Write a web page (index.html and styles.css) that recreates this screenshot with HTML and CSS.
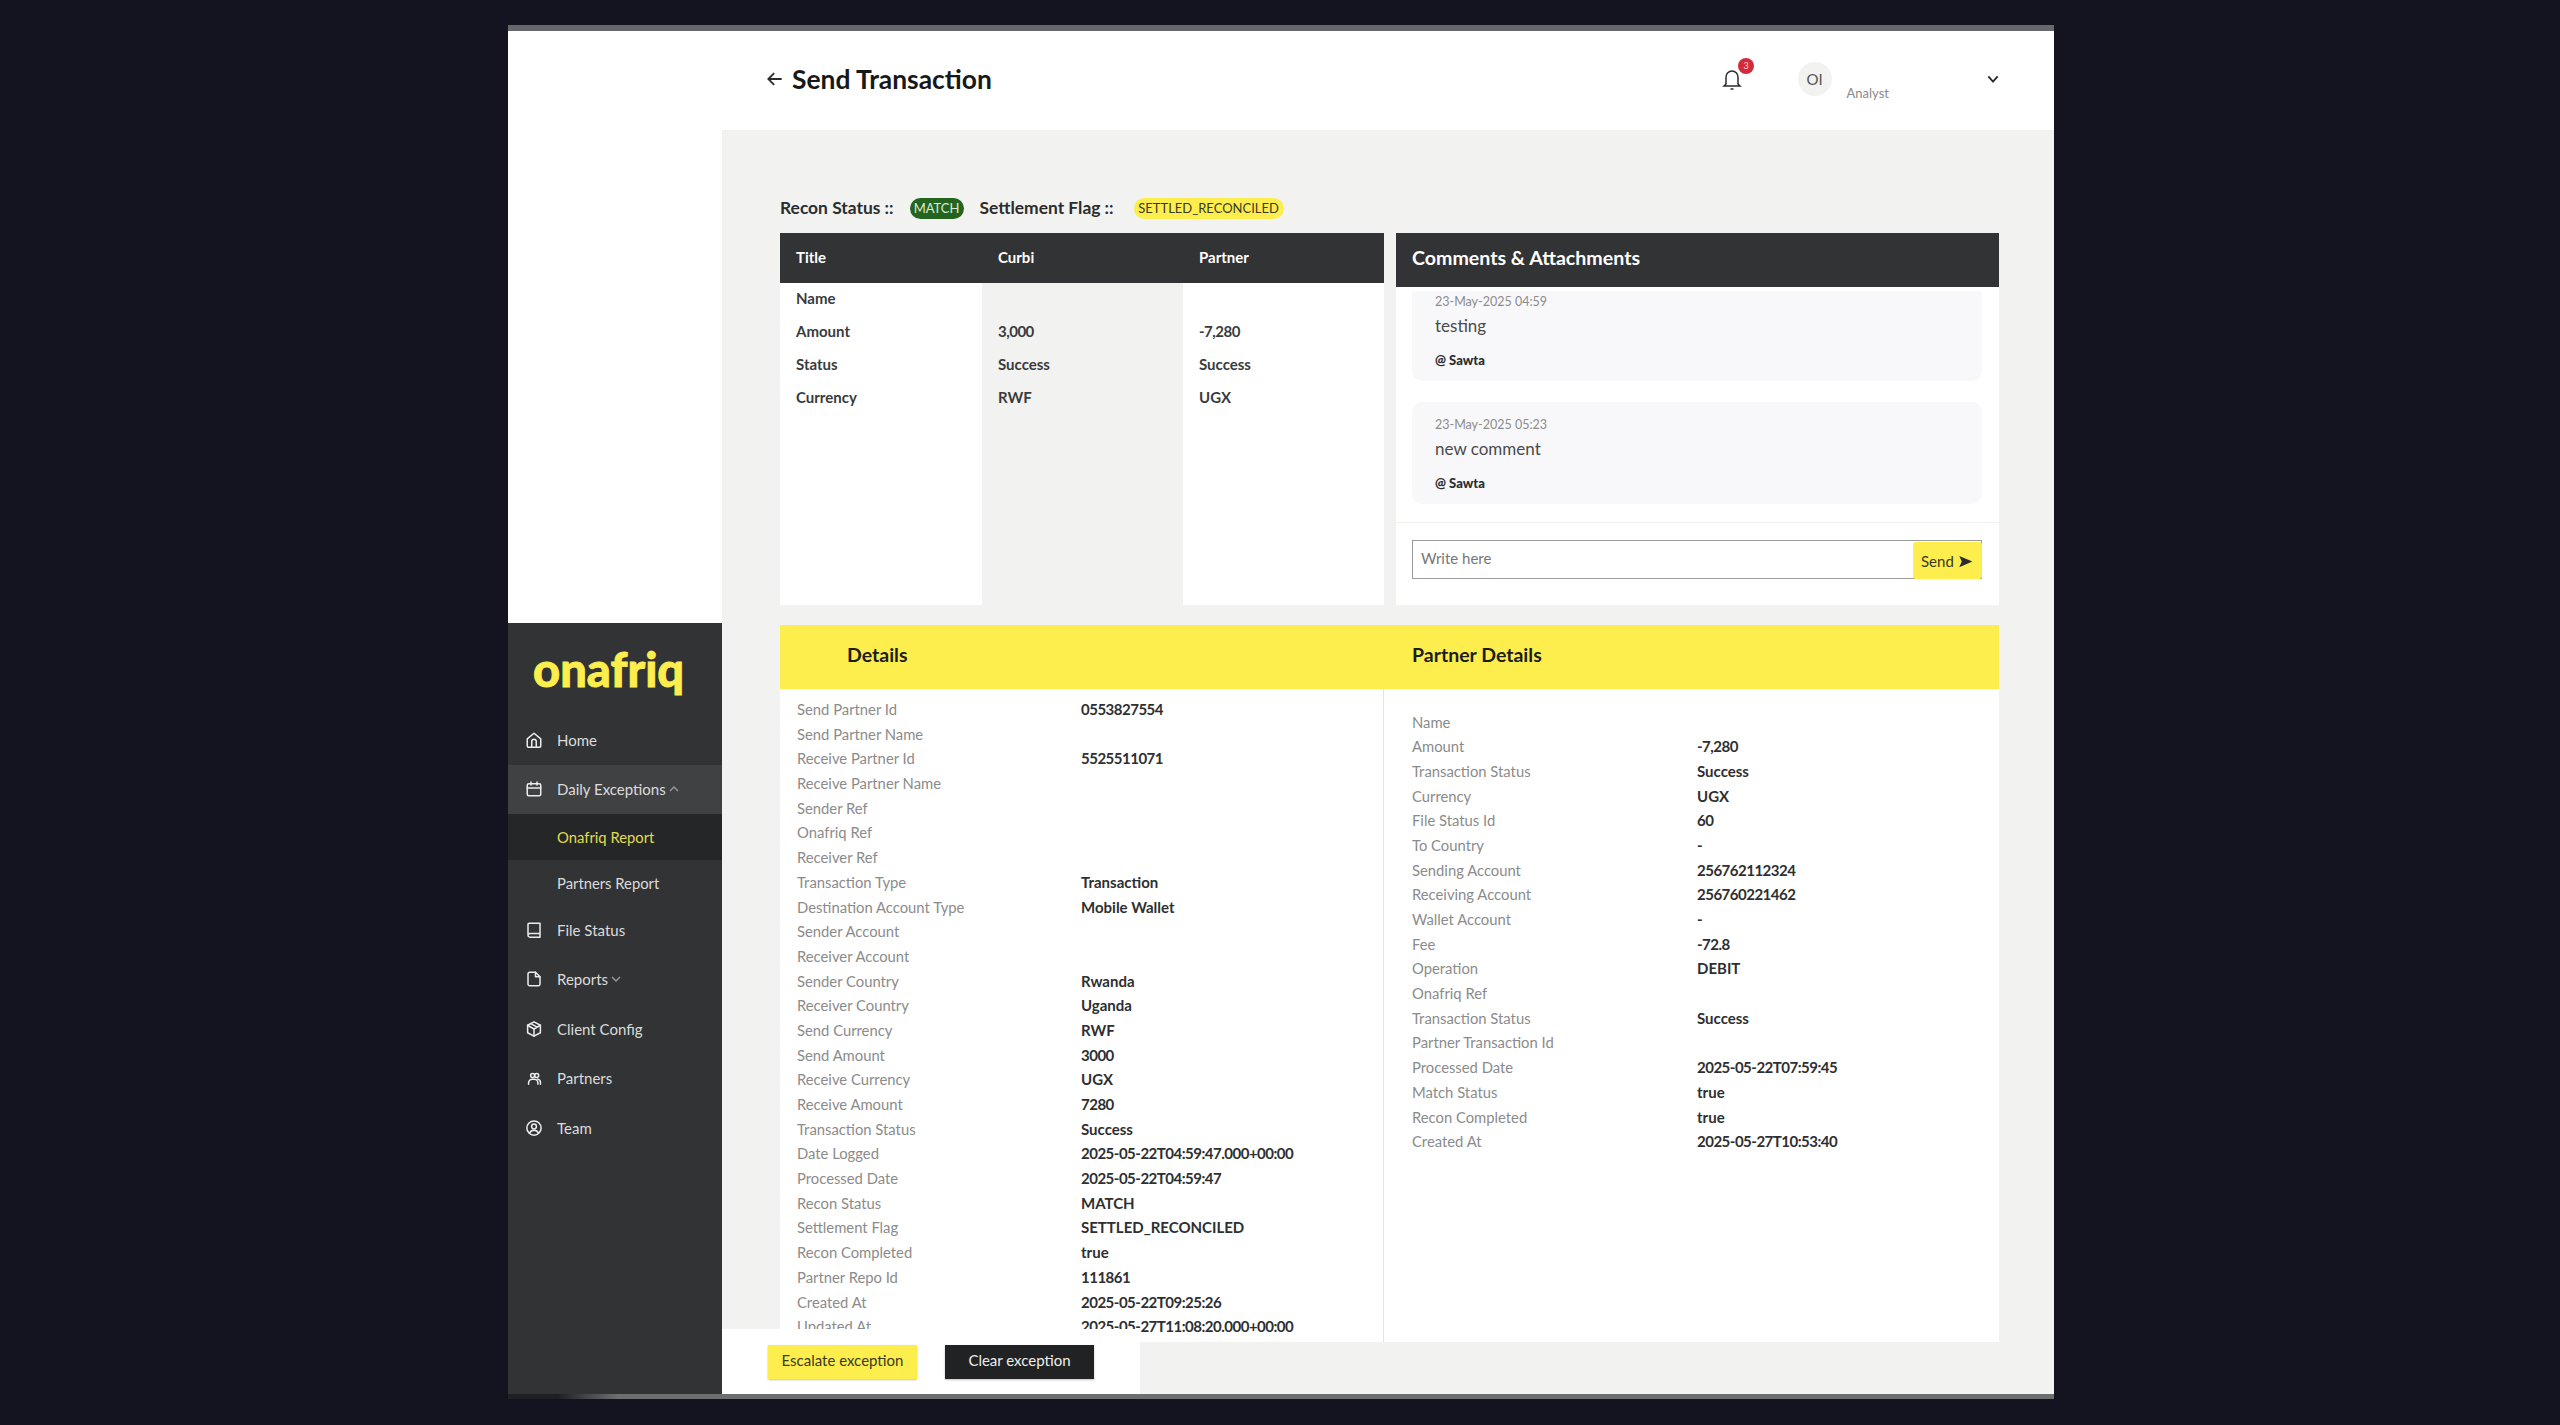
FILE: index.html
```html
<!DOCTYPE html>
<html lang="en">
<head>
<meta charset="utf-8">
<title>Send Transaction</title>
<link rel="stylesheet" href="styles.css">
</head>
<body>
<div class="app">
  <div class="side">
    <nav class="sidebar">
      <div class="logo">onafriq</div>
      <a class="nav"><svg class="ico" viewBox="0 0 24 24"><path d="M3 10.500 12 3l9 7.500V20a1.500 1.500 0 0 1-1.500 1.500h-15A1.500 1.500 0 0 1 3 20z"/><path d="M9 21.500V14a3 3 0 0 1 6 0v7.500"/></svg>Home</a>
      <a class="nav nav-open"><svg class="ico" viewBox="0 0 24 24"><rect x="3" y="5" width="18" height="16" rx="2"/><path d="M3 10.500h18M8 2.500v4M16 2.500v4"/></svg>Daily Exceptions<svg class="caret" viewBox="0 0 12 12"><path d="m2 8 4-4 4 4"/></svg></a>
      <a class="sub sub-active">Onafriq Report</a>
      <a class="sub">Partners Report</a>
      <a class="nav"><svg class="ico" viewBox="0 0 24 24"><path d="M4 18.500V4.500A1.500 1.500 0 0 1 5.500 3H20v18.500H6.500A2.500 2.500 0 0 1 4 19a2.500 2.500 0 0 1 2.500-2.500H20"/></svg>File Status</a>
      <a class="nav"><svg class="ico" viewBox="0 0 24 24"><path d="M14 3H6.500A2.500 2.500 0 0 0 4 5.500v13A2.500 2.500 0 0 0 6.500 21h11a2.500 2.500 0 0 0 2.500-2.500V9z"/><path d="M14 3v6h6"/></svg>Reports<svg class="caret" viewBox="0 0 12 12"><path d="m2 4 4 4 4-4"/></svg></a>
      <a class="nav"><svg class="ico" viewBox="0 0 24 24"><path d="M12 2.500 20.500 7v10L12 21.500 3.500 17V7z"/><path d="m3.500 7 8.500 5 8.500-5M12 12v9.500M7.700 4.800l8.600 4.700"/></svg>Client Config</a>
      <a class="nav"><svg class="ico ico-sm" viewBox="0 0 24 24"><circle cx="9" cy="7" r="3.200"/><circle cx="15.500" cy="7" r="3.200"/><path d="M2.500 21v-2a6 6 0 0 1 6-6h3a6 6 0 0 1 6 6v2M17 13a5 5 0 0 1 4.500 5v3"/></svg>Partners</a>
      <a class="nav"><svg class="ico" viewBox="0 0 24 24"><circle cx="12" cy="12" r="9.500"/><circle cx="12" cy="10" r="3.200"/><path d="M6 19a6.500 6.500 0 0 1 12 0"/></svg>Team</a>
    </nav>
  </div>
  <main class="main">
    <header class="topbar">
      <svg class="back" viewBox="0 0 24 24"><path d="M20 12H4M11 5l-7 7 7 7"/></svg>
      <h1 class="title">Send Transaction</h1>
      <div class="bell">
        <svg viewBox="0 0 24 24"><path d="M6 17V10a6 6 0 0 1 12 0v7l2 2H4z"/><path d="M10.500 22h3"/></svg>
        <span class="badge">3</span>
      </div>
      <span class="avatar">OI</span>
      <span class="role">Analyst</span>
      <svg class="chev" viewBox="0 0 24 24"><path d="m5 8 7 8 7-8"/></svg>
    </header>
    <section class="content">
      <div class="status">
        <b class="status-label">Recon Status ::</b><span class="pill pill-green">MATCH</span>
        <b class="status-label">Settlement Flag ::</b><span class="pill pill-yellow">SETTLED_RECONCILED</span>
      </div>
      <div class="top-grid">
        <div class="compare">
          <div class="compare-col">
            <div class="compare-head">Title</div>
            <div class="cell">Name</div><div class="cell">Amount</div><div class="cell">Status</div><div class="cell">Currency</div>
          </div>
          <div class="compare-col compare-mid">
            <div class="compare-head">Curbi</div>
            <div class="cell"></div><div class="cell n">3,000</div><div class="cell">Success</div><div class="cell">RWF</div>
          </div>
          <div class="compare-col">
            <div class="compare-head">Partner</div>
            <div class="cell"></div><div class="cell n">-7,280</div><div class="cell">Success</div><div class="cell">UGX</div>
          </div>
        </div>
        <div class="comments">
          <h2 class="comments-head">Comments &amp; Attachments</h2>
          <div class="comment-list">
            <article class="comment comment-first">
              <div class="c-date">23-May-2025 04:59</div>
              <div class="c-text">testing</div>
              <div class="c-user">@ Sawta</div>
            </article>
            <article class="comment">
              <div class="c-date">23-May-2025 05:23</div>
              <div class="c-text">new comment</div>
              <div class="c-user">@ Sawta</div>
            </article>
          </div>
          <div class="composer">
            <div class="input">
              <span class="placeholder">Write here</span>
              <span class="send">Send<svg viewBox="0 0 24 24"><path d="M2 3l21 9-21 9 4-9z"/></svg></span>
            </div>
          </div>
        </div>
      </div>
      <div class="details">
        <div class="details-head">
          <h2 class="dh dh-left">Details</h2>
          <h2 class="dh dh-right">Partner Details</h2>
        </div>
        <div class="details-body">
          <dl class="kv kv-left">
            <dt>Send Partner Id</dt><dd class="n">0553827554</dd>
            <dt>Send Partner Name</dt><dd></dd>
            <dt>Receive Partner Id</dt><dd class="n">5525511071</dd>
            <dt>Receive Partner Name</dt><dd></dd>
            <dt>Sender Ref</dt><dd></dd>
            <dt>Onafriq Ref</dt><dd></dd>
            <dt>Receiver Ref</dt><dd></dd>
            <dt>Transaction Type</dt><dd>Transaction</dd>
            <dt>Destination Account Type</dt><dd>Mobile Wallet</dd>
            <dt>Sender Account</dt><dd></dd>
            <dt>Receiver Account</dt><dd></dd>
            <dt>Sender Country</dt><dd>Rwanda</dd>
            <dt>Receiver Country</dt><dd>Uganda</dd>
            <dt>Send Currency</dt><dd>RWF</dd>
            <dt>Send Amount</dt><dd class="n">3000</dd>
            <dt>Receive Currency</dt><dd>UGX</dd>
            <dt>Receive Amount</dt><dd class="n">7280</dd>
            <dt>Transaction Status</dt><dd>Success</dd>
            <dt>Date Logged</dt><dd class="n">2025-05-22T04:59:47.000+00:00</dd>
            <dt>Processed Date</dt><dd class="n">2025-05-22T04:59:47</dd>
            <dt>Recon Status</dt><dd>MATCH</dd>
            <dt>Settlement Flag</dt><dd>SETTLED_RECONCILED</dd>
            <dt>Recon Completed</dt><dd>true</dd>
            <dt>Partner Repo Id</dt><dd class="n">111861</dd>
            <dt>Created At</dt><dd class="n">2025-05-22T09:25:26</dd>
            <dt>Updated At</dt><dd class="n">2025-05-27T11:08:20.000+00:00</dd>
          </dl>
          <dl class="kv kv-right">
            <dt>Name</dt><dd></dd>
            <dt>Amount</dt><dd class="n">-7,280</dd>
            <dt>Transaction Status</dt><dd>Success</dd>
            <dt>Currency</dt><dd>UGX</dd>
            <dt>File Status Id</dt><dd class="n">60</dd>
            <dt>To Country</dt><dd>-</dd>
            <dt>Sending Account</dt><dd class="n">256762112324</dd>
            <dt>Receiving Account</dt><dd class="n">256760221462</dd>
            <dt>Wallet Account</dt><dd>-</dd>
            <dt>Fee</dt><dd class="n">-72.8</dd>
            <dt>Operation</dt><dd>DEBIT</dd>
            <dt>Onafriq Ref</dt><dd></dd>
            <dt>Transaction Status</dt><dd>Success</dd>
            <dt>Partner Transaction Id</dt><dd></dd>
            <dt>Processed Date</dt><dd class="n">2025-05-22T07:59:45</dd>
            <dt>Match Status</dt><dd>true</dd>
            <dt>Recon Completed</dt><dd>true</dd>
            <dt>Created At</dt><dd class="n">2025-05-27T10:53:40</dd>
          </dl>
        </div>
      </div>
    </section>
    <div class="actions">
      <button class="btn btn-yellow">Escalate exception</button>
      <button class="btn btn-dark">Clear exception</button>
    </div>
  </main>
  <div class="strip"></div>
</div>
</body>
</html>
```
FILE: styles.css
```css
* { box-sizing: border-box; }
html, body { margin: 0; height: 100%; }
body {
  background: #13141f;
  font-family: "Lato", "Noto Sans", sans-serif;
  color: #2b2c2e;
  display: flex;
  justify-content: center;
  padding: 25px 0 0 2px;
  overflow: hidden;
}
.app {
  width: 1546px;
  height: 1374px;
  display: grid;
  grid-template-columns: 214px 1fr;
  grid-template-rows: 1fr 5px;
  background: #fff;
  border-top: 6px solid #67686a;
}
.strip {
  grid-column: 1 / -1;
  background: linear-gradient(90deg, #1f2025 0, #1f2025 50px, #6d6e70 110px);
}
.side { display: flex; flex-direction: column; justify-content: flex-end; min-height: 0; }
.sidebar { height: 771px; background: #323335; color: #dcdcdc; }
.logo {
  height: 92px;
  padding: 15px 0 0 25px;
  font-size: 47px;
  line-height: 62px;
  font-weight: 900;
  color: #fdee4e;
  -webkit-text-stroke: 0.8px #fdee4e;
}
.nav {
  height: 49.500px;
  display: flex;
  align-items: center;
  padding-left: 17px;
  font-size: 15px;
  color: #dcdcdc;
}
.nav-open { background: #404143; }
.ico {
  width: 18px;
  height: 18px;
  margin-right: 14px;
  fill: none;
  stroke: #ececec;
  stroke-width: 2;
  stroke-linejoin: round;
  stroke-linecap: round;
  flex: none;
}
.ico-sm { width: 15px; height: 15px; margin: 0 15.500px 0 1.500px; stroke-width: 2.400; }
.caret {
  width: 12px;
  height: 12px;
  margin-left: 2px;
  fill: none;
  stroke: #9a9a9a;
  stroke-width: 1.400;
}
.sub {
  height: 45px;
  display: flex;
  align-items: center;
  padding-left: 49px;
  font-size: 14.800px;
  color: #dcdcdc;
}
.sub-active { background: #252628; color: #e4dc4e; height: 46px; }

.main { position: relative; display: flex; flex-direction: column; min-width: 0; min-height: 0; background: #f2f2f0; }
.topbar {
  height: 99px;
  flex: none;
  background: #fff;
  display: flex;
  align-items: center;
  padding: 0 0 4px 43px;
  position: relative;
}
.back { width: 20px; height: 20px; fill: none; stroke: #2b2c2e; stroke-width: 2.200; margin-right: 7px; }
.title { margin: 0; font-size: 26.400px; font-weight: 700; color: #17181a; flex: 1; }
.bell { position: relative; width: 24px; height: 24px; margin-right: 53.500px; }
.bell svg { width: 24px; height: 24px; fill: none; stroke: #2b2c2e; stroke-width: 1.500; display: block; }
.badge {
  position: absolute;
  top: -9px;
  right: -10px;
  width: 16px;
  height: 16px;
  border-radius: 50%;
  background: #d42a3a;
  color: #f8d8d8;
  font-size: 9px;
  line-height: 16px;
  text-align: center;
}
.avatar {
  width: 34px;
  height: 34px;
  border-radius: 50%;
  background: #f2f2f0;
  text-align: center;
  line-height: 34px;
  font-size: 15px;
  color: #555;
  margin-right: 15px;
}
.role { font-size: 13px; color: #8a8a8a; width: 138.500px; align-self: flex-end; padding-bottom: 25px; }
.chev { width: 16px; height: 16px; fill: none; stroke: #2b2c2e; stroke-width: 2.800; margin-right: 53px; }

.content {
  flex: 1;
  padding: 68px 55px 52px 58px;
  display: flex;
  flex-direction: column;
  min-height: 0;
}
.status { height: 35px; flex: none; display: flex; align-items: center; padding-bottom: 14px; }
.status-label { font-size: 17.400px; font-weight: 700; color: #2b2c2e; margin-top: -2px; }
.pill { height: 21px; border-radius: 11px; font-size: 13px; line-height: 21px; text-align: center; }
.pill-green { width: 54px; margin: 0 16px; background: #24641e; color: #d9ead6; }
.pill-yellow { width: 150px; margin-left: 20px; background: #fdee4e; color: #3a3a20; }

.top-grid { height: 372px; flex: none; display: grid; grid-template-columns: 604px 603px; column-gap: 12px; }
.compare { background: #fff; display: grid; grid-template-columns: 202px 201px 201px; }
.compare-mid { background: #f2f2f0; }
.compare-head {
  height: 50px;
  background: #323335;
  color: #fff;
  font-size: 15px;
  font-weight: 700;
  line-height: 48px;
  padding-left: 16px;
}
.cell { height: 33px; line-height: 31px; padding-left: 16px; font-size: 15px; font-weight: 700; color: #3a3b3d; }
.comments { background: #fff; display: flex; flex-direction: column; min-height: 0; }
.comments-head {
  height: 54px;
  flex: none;
  margin: 0;
  padding-left: 16px;
  background: #323335;
  color: #fff;
  font-size: 19.600px;
  font-weight: 700;
  line-height: 50px;
}
.comment-list {
  height: 232px;
  flex: none;
  margin-top: 4px;
  padding: 0 17px 0 16px;
  overflow: hidden;
  border-bottom: 1px solid #f2f2f0;
  display: flex;
  flex-direction: column;
  gap: 21px;
}
.comment { height: 102px; flex: none; background: #f8f8fb; border-radius: 10px; padding: 13px 23px 0; }
.comment-first { margin-top: -12px; }
.c-date { font-size: 12.500px; line-height: 20px; color: #8c8c8c; }
.c-text { font-size: 17px; line-height: 26px; color: #4a4a4a; margin-top: 1px; }
.c-user { font-size: 13px; line-height: 20px; font-weight: 900; color: #2b2c2e; margin-top: 11px; }
.composer { padding: 17px 17px 0 16px; }
.input {
  height: 39px;
  border: 1px solid #9c9c9c;
  display: flex;
  justify-content: space-between;
  align-items: flex-start;
  background: #fff;
}
.placeholder { font-size: 15px; color: #777; line-height: 34px; padding-left: 8px; }
.send {
  width: 69px;
  height: 37px;
  margin: 1px -1px 0 0;
  background: #fdee4e;
  border-radius: 3px;
  display: flex;
  align-items: center;
  padding-left: 8px;
  gap: 4px;
  font-size: 15px;
  color: #3a3a20;
}
.send svg { width: 15px; height: 15px; fill: #2b2c2e; margin-top: 2px; }

.details { margin-top: 20px; flex: 1; min-height: 0; background: #fff; display: flex; flex-direction: column; }
.details-head { height: 64px; flex: none; background: #fdee4e; display: grid; grid-template-columns: 603px 1fr; }
.dh { margin: 0; font-size: 19.500px; font-weight: 700; color: #1c1d1f; line-height: 60px; }
.dh-left { padding-left: 67px; }
.dh-right { padding-left: 29px; }
.details-body { flex: 1; min-height: 0; display: grid; grid-template-columns: 603px 1fr; overflow: hidden; }
.kv {
  margin: 0;
  display: grid;
  grid-auto-rows: 24.700px;
  align-content: start;
  font-size: 15px;
  line-height: 24.700px;
  white-space: nowrap;
}
.kv dt { color: #8b8b8b; font-size: 14.800px; }
.kv dd { margin: 0; font-weight: 700; color: #2e2f31; }
.n { letter-spacing: -0.500px; }
.kv-left { grid-template-columns: 284px 1fr; padding: 8px 0 0 17px; }
.kv-right { grid-template-columns: 285px 1fr; padding: 20.500px 0 0 28px; border-left: 1px solid #e4e4e4; }

.actions {
  position: absolute;
  left: 0;
  bottom: 0;
  width: 418px;
  height: 65px;
  background: #fff;
  display: flex;
  gap: 28px;
  padding: 16px 0 0 46px;
}
.btn {
  width: 149px;
  height: 34px;
  border: 0;
  font-family: inherit;
  font-size: 15px;
  padding: 0 0 4px;
  box-shadow: 0 1px 2px rgba(0,0,0,.25);
}
.btn-yellow { background: #fdee4e; color: #3a3a20; }
.btn-dark { background: #212224; color: #eee; }
```
